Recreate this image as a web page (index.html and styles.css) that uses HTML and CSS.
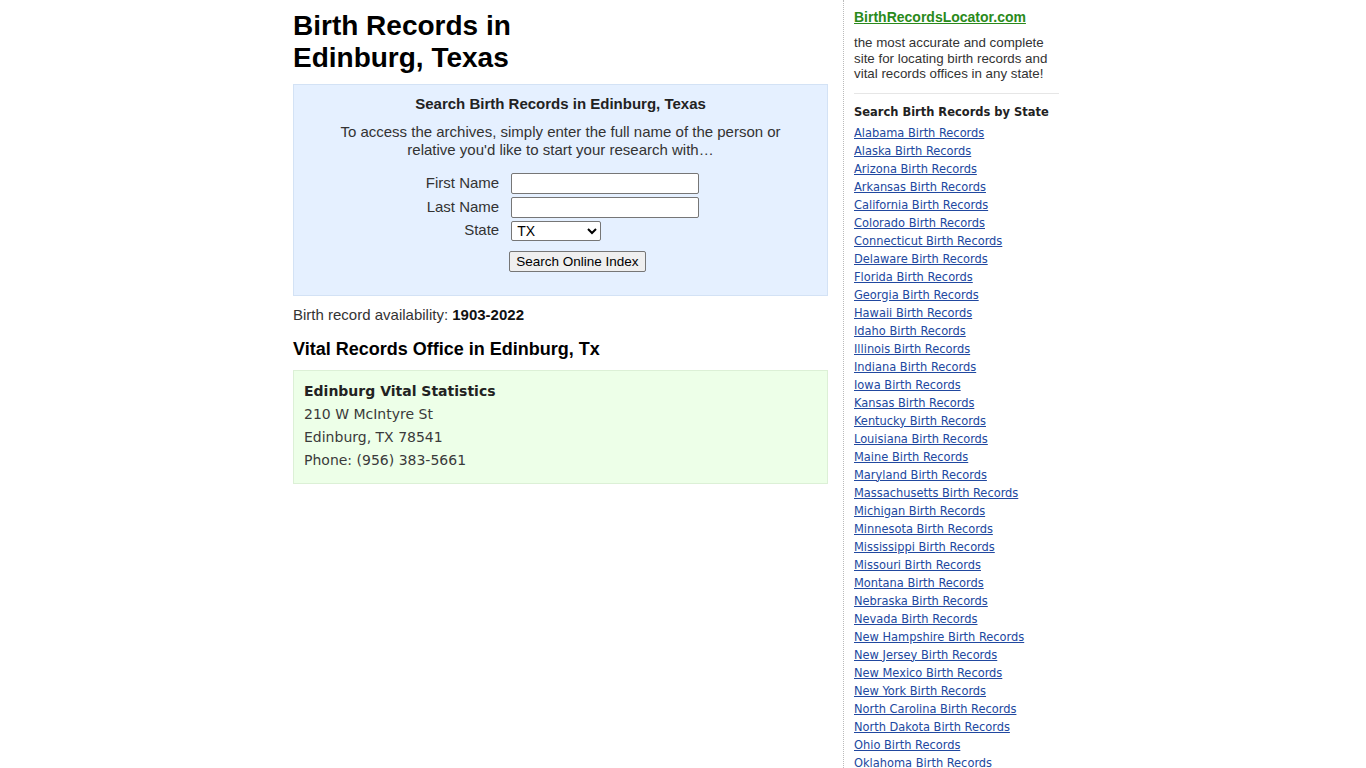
FILE: index.html
```html
<!DOCTYPE html>
<html lang="en">
<head>
<meta charset="utf-8">
<title>Birth Records in Edinburg, Texas</title>
<link rel="stylesheet" href="styles.css">
</head>
<body>
<div class="page">
  <div class="main">
    <h1 class="title">Birth Records in<br>Edinburg, Texas</h1>
    <div class="search-box">
      <div class="search-title">Search Birth Records in Edinburg, Texas</div>
      <p class="search-intro">To access the archives, simply enter the full name of the person or relative you'd like to start your research with…</p>
      <form class="search-form">
        <label class="lbl" for="fn">First Name</label>
        <input class="txt" id="fn" type="text">
        <label class="lbl" for="ln">Last Name</label>
        <input class="txt" id="ln" type="text">
        <label class="lbl" for="st">State</label>
        <select class="sel" id="st"><option>TX</option></select>
        <span></span>
        <button class="btn" type="button">Search Online Index</button>
      </form>
    </div>
    <p class="avail">Birth record availability: <b>1903-2022</b></p>
    <h2 class="office-head">Vital Records Office in Edinburg, Tx</h2>
    <div class="office">
      <div class="office-name">Edinburg Vital Statistics</div>
      <div>210 W McIntyre St</div>
      <div>Edinburg, TX 78541</div>
      <div>Phone: (956) 383-5661</div>
    </div>
  </div>
  <div class="side">
    <a class="logo" href="#">BirthRecordsLocator.com</a>
    <p class="tagline">the most accurate and complete site for locating birth records and vital records offices in any state!</p>
    <hr class="rule">
    <div class="side-head">Search Birth Records by State</div>
    <ul class="states">
      <li><a href="#">Alabama Birth Records</a></li>
      <li><a href="#">Alaska Birth Records</a></li>
      <li><a href="#">Arizona Birth Records</a></li>
      <li><a href="#">Arkansas Birth Records</a></li>
      <li><a href="#">California Birth Records</a></li>
      <li><a href="#">Colorado Birth Records</a></li>
      <li><a href="#">Connecticut Birth Records</a></li>
      <li><a href="#">Delaware Birth Records</a></li>
      <li><a href="#">Florida Birth Records</a></li>
      <li><a href="#">Georgia Birth Records</a></li>
      <li><a href="#">Hawaii Birth Records</a></li>
      <li><a href="#">Idaho Birth Records</a></li>
      <li><a href="#">Illinois Birth Records</a></li>
      <li><a href="#">Indiana Birth Records</a></li>
      <li><a href="#">Iowa Birth Records</a></li>
      <li><a href="#">Kansas Birth Records</a></li>
      <li><a href="#">Kentucky Birth Records</a></li>
      <li><a href="#">Louisiana Birth Records</a></li>
      <li><a href="#">Maine Birth Records</a></li>
      <li><a href="#">Maryland Birth Records</a></li>
      <li><a href="#">Massachusetts Birth Records</a></li>
      <li><a href="#">Michigan Birth Records</a></li>
      <li><a href="#">Minnesota Birth Records</a></li>
      <li><a href="#">Mississippi Birth Records</a></li>
      <li><a href="#">Missouri Birth Records</a></li>
      <li><a href="#">Montana Birth Records</a></li>
      <li><a href="#">Nebraska Birth Records</a></li>
      <li><a href="#">Nevada Birth Records</a></li>
      <li><a href="#">New Hampshire Birth Records</a></li>
      <li><a href="#">New Jersey Birth Records</a></li>
      <li><a href="#">New Mexico Birth Records</a></li>
      <li><a href="#">New York Birth Records</a></li>
      <li><a href="#">North Carolina Birth Records</a></li>
      <li><a href="#">North Dakota Birth Records</a></li>
      <li><a href="#">Ohio Birth Records</a></li>
      <li><a href="#">Oklahoma Birth Records</a></li>
      <li><a href="#">Oregon Birth Records</a></li>
      <li><a href="#">Pennsylvania Birth Records</a></li>
      <li><a href="#">Rhode Island Birth Records</a></li>
      <li><a href="#">South Carolina Birth Records</a></li>
      <li><a href="#">South Dakota Birth Records</a></li>
      <li><a href="#">Tennessee Birth Records</a></li>
      <li><a href="#">Texas Birth Records</a></li>
      <li><a href="#">Utah Birth Records</a></li>
      <li><a href="#">Vermont Birth Records</a></li>
      <li><a href="#">Virginia Birth Records</a></li>
      <li><a href="#">Washington Birth Records</a></li>
      <li><a href="#">West Virginia Birth Records</a></li>
      <li><a href="#">Wisconsin Birth Records</a></li>
      <li><a href="#">Wyoming Birth Records</a></li>
    </ul>
  </div>
</div>
</body>
</html>
```
FILE: styles.css
```css
html, body {
  margin: 0;
  padding: 0;
  background: #fff;
}
body {
  font-family: "Liberation Sans", Arial, sans-serif;
  color: #222;
}
.page {
  width: 780px;
  margin: 0 auto;
  display: flex;
  align-items: stretch;
}
.main {
  width: 535px;
  flex: none;
}
.title {
  margin: 10px 0 10px;
  font-size: 28px;
  line-height: 32px;
  font-weight: bold;
  color: #000;
}
.search-box {
  background: #e5f0ff;
  border: 1px solid #d3e2f5;
  padding: 10px 10px 23px;
  text-align: center;
}
.search-title {
  font-size: 15px;
  line-height: 18px;
  font-weight: bold;
  color: #222;
}
.search-intro {
  margin: 10px 30px 14px;
  font-size: 15px;
  line-height: 18px;
  color: #333;
}
.search-form {
  display: grid;
  grid-template-columns: auto 188px;
  justify-content: center;
  column-gap: 12px;
  row-gap: 3px;
  align-items: center;
  margin-left: 4px;
}
.lbl {
  text-align: right;
  font-size: 15px;
  line-height: 20px;
  color: #333;
  position: relative;
  top: -1px;
}
.txt {
  width: 188px;
  height: 21px;
  box-sizing: border-box;
  margin: 0;
  border: 1px solid #767676;
  border-radius: 2px;
  background: #fff;
  padding: 1px 3px;
  font-family: "Liberation Sans", Arial, sans-serif;
  font-size: 13px;
}
.sel {
  width: 90px;
  height: 20px;
  box-sizing: border-box;
  margin: 0;
  border: 1px solid #767676;
  border-radius: 2px;
  background: #fff;
  font-family: "Liberation Sans", Arial, sans-serif;
  font-size: 14px;
  color: #000;
  padding: 0 1px;
}
.btn {
  justify-self: start;
  margin: 7px 0 0 -2px;
  height: 21px;
  padding: 0 6px;
  border: 1px solid #767676;
  border-radius: 2px;
  background: #efefef;
  font-family: "Liberation Sans", Arial, sans-serif;
  font-size: 13.5px;
  color: #000;
}
.avail {
  margin: 10px 0 0;
  font-size: 15px;
  line-height: 18px;
  color: #333;
}
.avail b {
  color: #111;
}
.office-head {
  margin: 14px 0 10px;
  font-size: 18px;
  line-height: 22px;
  font-weight: bold;
  color: #000;
}
.office {
  background: #edffe8;
  border: 1px solid #dcf0d6;
  padding: 9px 10px 11px;
  font-family: "DejaVu Sans", Verdana, sans-serif;
  font-size: 14px;
  line-height: 23px;
  color: #3a3a3a;
}
.office-name {
  font-weight: bold;
  color: #222;
}
.side {
  margin-left: 15px;
  padding: 9px 0 0 10px;
  border-left: 1px dotted #bbb;
  width: 205px;
  min-height: 768px;
  box-sizing: content-box;
}
.logo {
  display: block;
  font-size: 14px;
  line-height: 16px;
  font-weight: bold;
  color: #2a8a1b;
  text-decoration: underline;
}
.tagline {
  margin: 10px 0 0;
  font-size: 13.33px;
  line-height: 15.5px;
  color: #333;
}
.rule {
  margin: 11px 0 0;
  border: 0;
  border-top: 1px solid #e6e6e6;
  height: 0;
}
.side-head {
  margin-top: 10px;
  font-family: "DejaVu Sans Condensed", "DejaVu Sans", sans-serif;
  font-size: 12.75px;
  line-height: 16px;
  font-weight: bold;
  color: #222;
}
.states {
  list-style: none;
  margin: 4px 0 0;
  padding: 0;
  font-family: "DejaVu Sans Condensed", "DejaVu Sans", sans-serif;
  font-size: 12.7px;
  line-height: 18px;
}
.states a {
  color: #2148a0;
  text-decoration: underline;
}
```
